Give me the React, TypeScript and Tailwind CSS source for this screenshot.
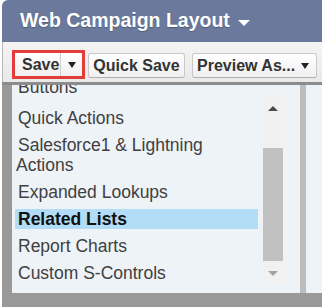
const items = [
  "Buttons",
  "Quick Actions",
  "Salesforce1 & Lightning Actions",
  "Expanded Lookups",
  "Related Lists",
  "Report Charts",
  "Custom S-Controls",
];

function DownCaret({ color = "border-t-[#222]" }: { color?: string }) {
  return (
    <span
      className={`inline-block h-0 w-0 border-x-[4.5px] border-t-[6px] border-x-transparent ${color}`}
    />
  );
}

export default function App() {
  const selected = "Related Lists";

  return (
    <div className="h-[307px] w-[322px] overflow-hidden bg-white font-['Liberation_Sans',Arial,sans-serif]">
      <div className="ml-[2px] flex h-full flex-col">
        {/* header */}
        <div className="flex h-[42px] shrink-0 items-center gap-[8px] rounded-tl-[6px] bg-[#6b7a9c] pl-[18px]">
          <span className="text-[19.5px] font-bold text-white [text-shadow:0_1px_1px_rgba(0,0,0,0.25)]">
            Web Campaign Layout
          </span>
          <span className="mt-[3px] inline-block h-0 w-0 border-x-[6.5px] border-t-[6px] border-x-transparent border-t-white" />
        </div>

        {/* toolbar */}
        <div className="flex h-[40px] shrink-0 items-start border-l border-[#b8b8b8] bg-gradient-to-b from-[#f4f4f4] to-[#e9e9e9] pl-[9px] pt-[8px] text-[16px] font-bold text-[#333]">
          <div className="h-[29px] w-[73px] border-[3px] border-[#e43b3b]">
            <div className="flex h-[23px] items-center rounded-[2px] bg-gradient-to-b from-white to-[#efefef]">
              <span className="w-[45px] pl-[7px] leading-none">Save</span>
              <span className="h-full w-px bg-[#cfcfcf]" />
              <span className="flex flex-1 items-center justify-center">
                <DownCaret />
              </span>
            </div>
          </div>
          <button className="ml-[3px] mt-[3px] flex h-[25px] w-[97px] items-center justify-center rounded-[3px] border border-[#c9c9c9] border-b-[#b0b0b0] bg-gradient-to-b from-white to-[#f0f0f0] leading-none">
            Quick Save
          </button>
          <button className="ml-[7px] mt-[3px] flex h-[25px] w-[125px] items-center rounded-[3px] border border-[#c9c9c9] border-b-[#b0b0b0] bg-gradient-to-b from-white to-[#f0f0f0] pl-[4px] leading-none">
            <span>Preview As...</span>
            <span className="ml-[6px] flex items-center">
              <DownCaret />
            </span>
          </button>
        </div>

        {/* body */}
        <div className="flex flex-1 border-t-[3px] border-[#8c8c8c] bg-[#999999] pb-[14px] pl-[10px]">
          <div className="flex flex-1 overflow-hidden bg-[#eef3f8]">
            <div className="mt-[-8px] flex w-[246px] flex-col gap-[7px] pl-[3px] text-[17.5px] leading-[20px] text-[#404040]">
              {items.map((it, i) => (
                <div
                  key={it}
                  className={
                    it === selected
                      ? "bg-[#b3dcf6] pl-[1px] indent-[2px] font-bold text-[#111]"
                      : i === 0
                        ? "mb-[4px] pl-[1px] indent-[2px]"
                        : "pl-[1px] indent-[2px]"
                  }
                >
                  {it}
                </div>
              ))}
            </div>
            <div className="ml-[3px] mt-[9px] flex h-[191px] w-[24px] flex-col items-center bg-[#f1f1f1]">
              <div className="flex h-[28px] items-center justify-center">
                <span className="inline-block h-0 w-0 border-x-[5px] border-b-[5px] border-x-transparent border-b-[#4a4a4a]" />
              </div>
              <div className="h-[26px]" />
              <div className="h-[113px] w-[20px] bg-[#c1c1c1]" />
              <div className="flex h-[24px] items-center justify-center">
                <span className="inline-block h-0 w-0 border-x-[5px] border-t-[5px] border-x-transparent border-t-[#a3a3a3]" />
              </div>
            </div>
          </div>
          <div className="w-[6px] bg-[#bdbdbd]" />
          <div className="w-[16px] bg-[#eef3f8]" />
        </div>
      </div>
    </div>
  );
}
